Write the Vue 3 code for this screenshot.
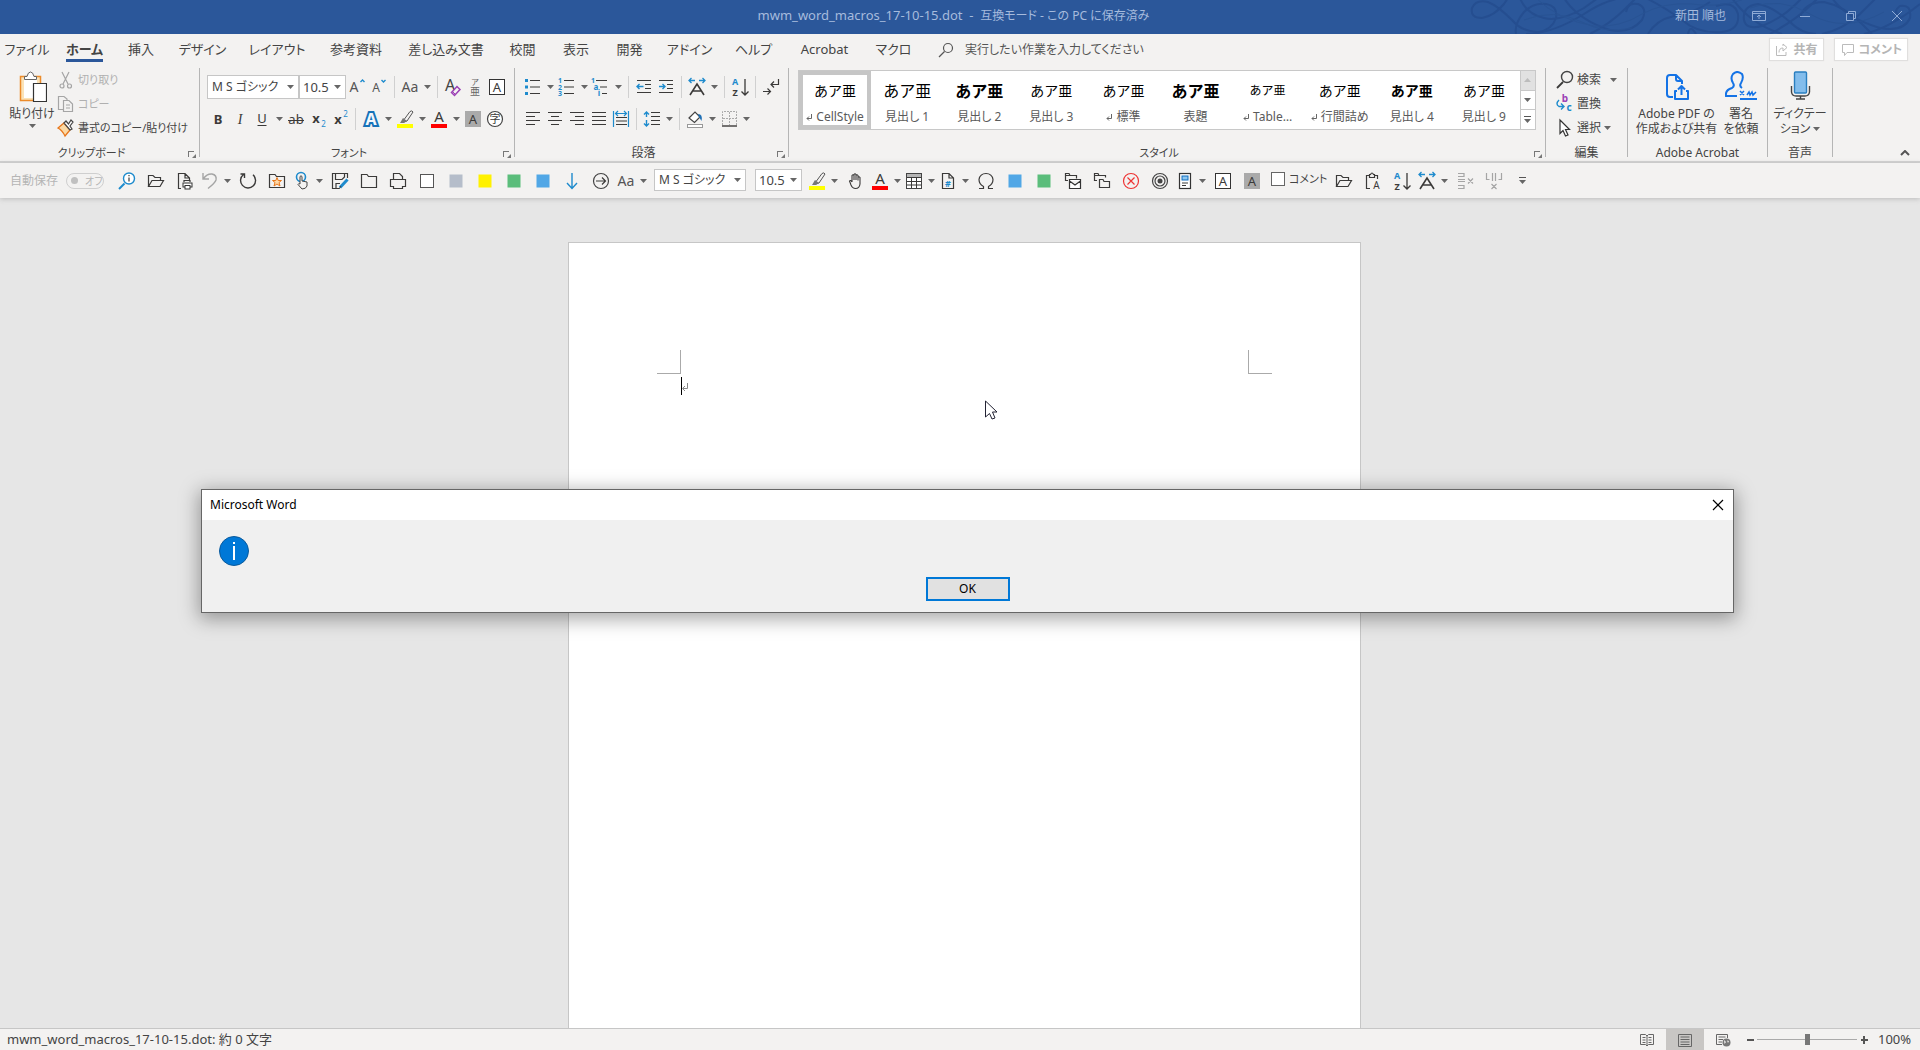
<script setup>
import { h, ref } from 'vue'

const K = '#3b3a39'
const B = '#1e8bcd'
const G = '#a5a5a5'

const line = (d, color = K, width = 1, extra = '') =>
  `<path d="${d}" fill="none" stroke="${color}" stroke-width="${width}" ${extra}/>`
const box = (fill, stroke = 'none') =>
  `<rect x="5.5" y="5.5" width="13" height="13" fill="${fill}" stroke="${stroke}"/>`
const glyph = (t, x, y, size, color = K, extra = '') =>
  `<text x="${x}" y="${y}" font-size="${size}" fill="${color}" text-anchor="middle" ${extra}>${t}</text>`
const sortIcon =
  glyph('A', 7, 10, 9, B, 'font-weight="700"') + glyph('Z', 7, 21, 9, K, 'font-weight="700"') +
  line('M17 4V20M13.5 16.5L17 20L20.500 16.500', K, 1.3)
const scaleIcon =
  line('M5 20L12 9L19 20M8 16H16', K, 1.6) + line('M4 5.500H10M6.500 3L4 5.500L6.500 8M14 5.500H20M17.500 3L20 5.500L17.500 8', B, 1.3)
const highlight =
  '<path d="M10 14L17 4.500Q19 3 20 5L14 14L10 15Z" fill="#f3f2f1" stroke="#555"/><path d="M10 11L7 16H11L14 14Z" fill="#777"/><rect x="4" y="17" width="16" height="4" fill="#ff0"/>'
const fontColor = glyph('A', 12, 15, 15) + '<rect x="4" y="17" width="16" height="4" fill="#f00"/>'
const openFolder = line('M4.500 17.500V6.500H9L11 8.500H16.500V11.500M4.500 17.500L8 11.500H19.500L16 17.500Z', K, 1.2)
const boxedA = '<rect x="4.500" y="4.500" width="15" height="15" fill="#fff" stroke="#333"/>' + glyph('A', 12, 17, 13)
const shadedA = '<rect x="4" y="4" width="16" height="16" fill="#aaa"/>' + glyph('A', 12, 17, 13)

const icons = {
  magnifyInfo: line('M4 20L9.500 14.500', B, 2) + '<circle cx="14" cy="9.500" r="5.500" fill="#fff" stroke="#1e8bcd" stroke-width="1.400"/>' + line('M14 8.500V12.500M14 6V7.200', K, 1.2),
  open: openFolder,
  printDoc: line('M8 19.500H5.500V4.500H12L16.500 9V11M12 4.500V9H16.500M11 13V11.500H17V13', K, 1.2) + '<rect x="10" y="14" width="9" height="4" fill="#fff" stroke="#333"/><rect x="12" y="16.500" width="5" height="3.500" fill="#fff" stroke="#333"/>',
  undo: line('M5 4V10H11M5.500 9.500Q9 4.500 14 5Q19 6 18 11Q17 14 10 19.500', G, 1.4),
  redo: line('M7.500 5.500A7.500 7.500 0 1 0 17 5.800M4.500 5H8.500V9', K, 1.4),
  star: line('M4.500 18.500V5.500H10L11.500 7.500H19.500V18.500Z', K, 1.2) + '<path d="M12 8.500L13.200 11.500H16.500L14 13.500L15 17L12 15L9 17L10 13.500L7.500 11.500H10.800Z" fill="#ffd9a8" stroke="#e8761a"/>',
  touch: '<circle cx="11" cy="8" r="4.500" fill="none" stroke="#1e8bcd" stroke-width="1.600"/><path d="M10 7.500Q11 6 12 7.500V12L17 13V17Q16 20 12 20L8 15.500Q8.500 14 10 15Z" fill="#f3f2f1" stroke="#444"/>',
  saveEdit: line('M11 19.500H4.500V4.500H19.500V9M7.500 4.500V10.500H14L16.500 8V4.500M8 19V14.500H12', K, 1.2) + line('M12 18.500L19.500 10.500', B, 3) + line('M11 20L13 17', K, 1),
  folder: line('M4.500 18.500V5.500H10L11.500 7.500H19.500V18.500Z', K, 1.2),
  printer: line('M7.500 10V4.500H13.500L16.500 7.500V10M4.500 10.500H19.500V17.500H16.500V19.500H7.500V17.500H4.500Z', K, 1.2),
  white: box('#fff', '#555'), gray: box('#b5bdca'), yellow: box('#fff100'), green: box('#5bbd7b'), blue: box('#51a7e6'),
  down: line('M12 4V19M7 14L12 19.500L17 14', B, 1.4),
  circleArrow: '<circle cx="12" cy="12" r="7.500" fill="none" stroke="#444" stroke-width="1.200"/>' + line('M7 12H16.500M13 8.500L16.500 12L13 15.500', K, 1.2),
  caseAa: glyph('Aa', 12, 17, 14, '#555'),
  highlight, fontColor,
  hand: line('M9 13V6.500Q10 5 11 6.500V11M11 11V5.500Q12 4 13 5.500V11M13 11V6.500Q14 5 15 6.500V11.500M15 11.500V8.500Q16 7 17 8.500V15Q16.500 19.500 12.500 19.500Q9.500 19.500 8 16L6.500 12Q7.500 10.500 9 13', K, 1.1),
  table: '<rect x="4.500" y="4.500" width="15" height="15" fill="#fff" stroke="#444"/><rect x="5" y="5" width="14" height="3" fill="#b5b5b5"/>' + line('M5 8.500H19M5 12.500H19M5 16H19M9.500 8V19M14.500 8V19', K, 1),
  docHash: line('M6.500 19.500V4.500H13L17.500 9V19.500ZM13 4.500V9H17.500', K, 1.2) + glyph('#', 12, 18, 9, B, 'font-weight="700"'),
  omega: line('M5 19.500H9.500V17.500Q5 15 5 10.500Q6 4.500 12 4.500Q18 4.500 19 10.500Q19 15 14.500 17.500V19.500H19', K, 1.2),
  foldersMail: line('M7 11.500H4.500V4.500H8L9 6.500H15.500V9.500M4.500 6.500H9', K, 1.2) + '<path d="M8.500 10.500H19.500V19.500H8.500ZM8.500 12L14 16L19.500 12" fill="#fff" stroke="#333" stroke-width="1.200"/>',
  folders: line('M7 11.500H4.500V4.500H8L9 6.500H15.500V8.500M4.500 6.500H9M9.500 18.500V10.500H13L14 12.500H19.500V18.500Z', K, 1.2),
  cancel: '<circle cx="12" cy="12" r="7.500" fill="none" stroke="#e33" stroke-width="1.200"/>' + line('M8.500 8.500L15.500 15.500M15.500 8.500L8.500 15.500', '#e33', 1.2),
  target: '<g fill="none" stroke="#444" stroke-width="1.200"><circle cx="12" cy="12" r="7.500"/><circle cx="12" cy="12" r="5"/></g><circle cx="12" cy="12" r="2.500" fill="#444"/>',
  docBlock: '<rect x="6.500" y="4.500" width="11" height="15" fill="#fff" stroke="#333" stroke-width="1.200"/><rect x="9" y="7" width="6" height="4" fill="#8cc6f0" stroke="#0f6cbd"/>' + line('M9 14H15M9 16.500H13'),
  boxedA, shadedA,
  pasteA: line('M9 19.500H5.500V6.500H8.500M13.500 6.500H16.500V10M8.500 8.500V5.500H9.500Q11 2.500 12.500 5.500H13.500V8.500Z', K, 1.2) + glyph('A', 15.500, 20, 10, K),
  sort: sortIcon, scale: scaleIcon,
  delRow: line('M5 4.500H11V7.500H5M5 19.500H11V16.500H5M5 10.500H12M5 12.500H12M15 9.500L20 14.500M20 9.500L15 14.500', G, 1.2),
  delCol: line('M4.500 4V10.500H7.500M19.500 4V10.500H16.500M10.500 4V12M13.500 4V12M9.500 15L14.500 20M14.500 15L9.500 20', G, 1.2),
  growA: glyph('A', 9, 17, 14, '#555') + line('M15.500 7L17.500 5L19.500 7', B, 1.4),
  shrinkA: glyph('A', 9, 17, 12, '#555') + line('M14.500 5L16.500 7L18.500 5', B, 1.4),
  clearA: glyph('A', 9, 16, 16, '#444') + '<path d="M10.500 17.500L16 11.500L19 14.500L13.500 20.500Z" fill="#f3f2f1" stroke="#9b3fb5" stroke-width="1.500"/>' + line('M11.500 16.500L14.500 19.500', '#9b3fb5'),
  ruby: glyph('ア', 12, 10, 8, '#666') + glyph('亜', 12, 20, 10, '#666'),
  bold: glyph('B', 12, 17, 13, K, 'font-weight="700"'),
  italic: glyph('I', 12, 17, 14, K, 'font-style="italic" font-family="Liberation Serif, serif"'),
  underline: glyph('U', 12, 16, 13) + line('M7.500 18.500H16.500'),
  strike: glyph('ab', 12, 17, 13) + line('M4 13.500H20'),
  sub: glyph('x', 10, 16, 13, K, 'font-weight="700"') + glyph('2', 17.500, 20, 8, B),
  sup: glyph('x', 10, 17, 13, K, 'font-weight="700"') + glyph('2', 17.500, 10, 8, B),
  effectA: glyph('A', 12, 18, 16, '#f3f8fd', 'stroke="#1672b8" stroke-width="4" paint-order="stroke" font-weight="700"'),
  circleJi: '<circle cx="12" cy="12" r="7.500" fill="#fff" stroke="#444" stroke-width="1.200"/>' + glyph('字', 12, 16, 11),
  bullets: '<path d="M4 4h3v3H4zM4 10.500h3v3H4zM4 17h3v3H4z" fill="#1e8bcd"/>' + line('M9 5.500H19M9 12H19M9 18.500H19', K, 1.2),
  numbers: glyph('1', 5, 8, 7, B, 'font-weight="700"') + glyph('2', 5, 15, 7, B, 'font-weight="700"') + glyph('3', 5, 21, 7, B, 'font-weight="700"') + line('M9 5.500H19M9 12H19M9 18.500H19', K, 1.2),
  multi: glyph('1', 4, 8, 7, B, 'font-weight="700"') + glyph('a', 7, 15, 8, B, 'font-weight="700"') + glyph('i', 10, 21, 8, B, 'font-weight="700"') + line('M7 5.500H18M11 12H18M13 18.500H18', K, 1.2),
  outdent: line('M5 5.500H19M13 9.500H19M13 13.500H19M5 17.500H19', K, 1.2) + line('M5 11.500H11.500M7.500 9L5 11.500L7.500 14', B, 1.4),
  indent: line('M5 5.500H19M13 9.500H19M13 13.500H19M5 17.500H19', K, 1.2) + line('M5 11.500H11M8.500 9L11 11.500L8.500 14', B, 1.4),
  marks: line('M19.500 4V9.500H12.500M15 6.500L12 9.500L15 12.500M4 16.500H11.500M8.500 13.500L11.500 16.500L8.500 19.500', K, 1.2),
  left: line('M5 5.500H19M5 9.500H14M5 13.500H19M5 17.500H14', K, 1.2),
  center: line('M5 5.500H19M8 9.500H16M5 13.500H19M8 17.500H16', K, 1.2),
  right: line('M5 5.500H19M10 9.500H19M5 13.500H19M10 17.500H19', K, 1.2),
  justify: line('M5 5.500H19M5 9.500H19M5 13.500H19M5 17.500H19', K, 1.2),
  spread: line('M7 10.500H18M7 14H18M7 17.500H18', K, 1.2) + line('M4.500 4V20M19.500 4V20M7 6.500H17M9 4L6.500 6.500L9 9M15 4L17.500 6.500L15 9', B, 1.2),
  spacing: line('M11 5.500H20M11 9.500H20M11 13.500H20M11 17.500H20', K, 1.2) + line('M6.500 5V10M4 7.500L6.500 5L9 7.500M6.500 13V19M4 16.500L6.500 19L9 16.500', B, 1.4),
  fill: '<path d="M6 11L12 5L17 10L11.500 15.500Z" fill="#fff" stroke="#444" stroke-width="1.200"/><path d="M15 7Q20 7 18.500 14L16 10Z" fill="#1e6fb5"/><rect x="4.500" y="17.500" width="15" height="3" fill="#fff" stroke="#999"/>',
  border: '<path d="M5.500 18V4.500H19.500V18M12.500 5V18M6 11.500H19" fill="none" stroke="#aaa" stroke-dasharray="2 1"/>' + line('M5 19H20', K, 1.4),
  cut: line('M8 4L14 16M15 4L9 16', G, 1.2) + '<g fill="none" stroke="#a5a5a5" stroke-width="1.200"><circle cx="8" cy="18" r="2"/><circle cx="15.500" cy="18" r="2"/></g>',
  copy: line('M9.500 17.500H4.500V4.500H10L13 7V8M9.500 19.500V8.500H15L18.500 12V19.500ZM12 13H16M12 16H16', G, 1.2),
  brush: '<path d="M4 12L10 7L16 14L11 20Q8 14 4 12Z" fill="#fbd9a5" stroke="#e8761a" stroke-width="1.300"/><path d="M10 7L12 5L14.500 8L17 4L19 6L16 10L18 13L16 14Z" fill="#fff" stroke="#444" stroke-width="1.200"/>',
  find: line('M4 20L10 14', K, 1.8) + '<circle cx="14" cy="9" r="5.500" fill="none" stroke="#444" stroke-width="1.400"/>',
  tell: line('M5 19L10.500 13.500', '#555', 1.3) + '<circle cx="14" cy="10" r="4.500" fill="none" stroke="#555" stroke-width="1.200"/>',
  replace: glyph('b', 12, 10, 10, '#9b3fb5', 'font-weight="700"') + glyph('c', 16, 19, 10, B, 'font-weight="700"') + line('M6 8Q2 12 6 14.500H11M8 11.500L11 14.500L8 17.500', B, 1.4),
  pointer: '<path d="M7 4V17.500L10 14.500L12.500 20L15 19L12.500 13.500H16.500Z" fill="#fff" stroke="#333" stroke-width="1.200"/>',
  share: line('M6.500 8V17.500H16V14M9 14.500Q9 10 13 10V13L17 9.500L13 6V8', '#bbb', 1),
  comment: line('M7.500 6.500H18.500V14.500H12L9.500 17.500V14.500H7.500Z', '#bbb', 1),
  ribbonMode: line('M5.500 7.500H18.500V16.500H5.500ZM5.500 9.500H18.500M12 15V11M10 13L12 11L14 13', '#8fabd6', 1),
  minimize: line('M7 12.500H17', '#8fabd6', 1),
  restore: line('M7.500 9.500H14.500V16.500H7.500ZM9.500 9V7.500H16.500V14.500H15', '#8fabd6', 1),
  close: line('M7 7L17 17M17 7L7 17', '#8fabd6', 1),
  closeDark: line('M7 7L17 17M17 7L7 17', '#000', 1.2),
  readMode: line('M5.500 6.500H10.500L12 8L13.500 6.500H18.500V16.500H13.500L12 18L10.500 16.500H5.500ZM12 8V18M7.500 9.500H10.500M7.500 12H10.500M7.500 14.500H10.500M13.500 9.500H16.500M13.500 12H16.500M13.500 14.500H16.500', '#666', 1),
  printMode: line('M5.500 6.500H18.500V18.500H5.500ZM7.500 9H16.500M7.500 11.500H16.500M7.500 14H16.500M7.500 16.500H16.500', '#666', 1),
  webMode: line('M11 16.500H5.500V6.500H16.500V10M7.500 9H14.500M7.500 11.500H12M7.500 14H11', '#666', 1) + '<circle cx="15.500" cy="14.500" r="4" fill="#777"/><path d="M13 12L15 14L13.500 16ZM16 12.500L18 13L17 15Z" fill="#f3f2f1"/>'
}

const Icon = (props) => h('svg', { viewBox: '0 0 24 24', width: 24, height: 24, 'aria-hidden': 'true', class: 'icon', innerHTML: icons[props.name] })
Icon.props = ['name']
const Caret = () => h('svg', { viewBox: '0 0 7 4', width: 7, height: 4, 'aria-hidden': 'true', class: 'caret', innerHTML: '<path d="M0 0H7L3.500 4Z" fill="#666"/>' })

const tabs = [
  ['ファイル', 54], ['ホーム', 61], ['挿入', 52], ['デザイン', 71], ['レイアウト', 78], ['参考資料', 80], ['差し込み文書', 100],
  ['校閲', 53], ['表示', 54], ['開発', 53], ['アドイン', 67], ['ヘルプ', 61], ['Acrobat', 81], ['マクロ', 57]
]
// A trailing "+" marks a button that opens a drop-down.
const fontTop = ['growA', 'shrinkA', '|', 'caseAa+', '|', 'clearA', 'ruby', 'boxedA']
const fontBottom = ['bold', 'italic', 'underline+', 'strike', 'sub', 'sup', '|', 'effectA+', 'highlight+', 'fontColor+', 'shadedA', 'circleJi']
const paraTop = ['bullets+', 'numbers+', 'multi+', '|', 'outdent', 'indent', '|', 'scale+', '|', 'sort', '|', 'marks']
const paraBottom = ['left', 'center', 'right', 'justify', 'spread', '|', 'spacing+', '|', 'fill+', 'border+']
const quickA = ['magnifyInfo', 'open', 'printDoc', 'undo+', 'redo', 'star', 'touch+', 'saveEdit', 'folder', 'printer', 'white', 'gray', 'yellow', 'green', 'blue', 'down', 'circleArrow', 'caseAa+']
const quickB = ['highlight+', 'hand', 'fontColor+', 'table+', 'docHash+', 'omega', 'blue', 'green', 'foldersMail', 'folders', 'cancel', 'target', 'docBlock+', 'boxedA', 'shadedA']
const quickC = ['open', 'pasteA', 'sort', 'scale+', 'delRow', 'delCol']

const styles = [
  { name: 'CellStyle', mark: true, kind: 'm' }, { name: '見出し 1', kind: 'l' }, { name: '見出し 2', kind: 'l b' }, { name: '見出し 3', kind: 'm' },
  { name: '標準', mark: true, kind: 'm' }, { name: '表題', kind: 'l b' }, { name: 'Table…', mark: true, kind: 's' },
  { name: '行間詰め', mark: true, kind: 'm' }, { name: '見出し 4', kind: 'm b' }, { name: '見出し 9', kind: 'm' }
]
const zoom = ref(50)
</script>

<template>
  <div class="app">
    <header class="title-bar">
      <svg class="swirls" viewBox="0 0 460 34" width="460" height="34" aria-hidden="true">
        <g fill="none" stroke="#254e90" stroke-width="2">
          <path d="M22 18Q10 18 12 8Q16 -1 28 2Q38 6 52 20Q62 32 78 32Q92 30 96 18Q98 6 86 4Q74 2 64 12Q54 24 56 34" />
          <path d="M22 18Q34 16 44 4L48 -2M60 -2Q66 14 84 18Q100 22 124 8L138 -2M104 -2Q118 20 150 30Q170 34 182 20Q188 8 178 4Q168 2 166 12" />
          <path d="M66 34Q92 34 124 14Q142 2 160 -2M130 34Q150 24 166 8L176 -2M186 -2Q206 8 222 20Q238 34 262 32Q280 30 278 14Q274 0 256 6" />
          <path d="M188 34Q196 20 214 16Q236 12 250 2M228 34Q230 24 236 34M272 -2Q290 24 322 34M284 20Q282 6 298 4Q312 6 330 22Q342 34 356 34" />
          <path d="M284 20Q286 30 302 26Q322 18 336 4L342 -2M310 34Q336 20 352 4L358 -2M340 18Q344 2 364 2Q384 6 402 24L412 34" />
          <path d="M362 34Q382 30 400 14L416 -2M372 -2Q386 18 420 28Q444 32 450 18Q452 4 440 6Q432 12 440 16M404 34Q430 28 460 4" />
        </g>
        <g fill="none" stroke="#285394" stroke-width="1">
          <path d="M76 -2Q98 20 134 26Q160 28 182 14Q204 2 232 4Q256 8 282 0M64 20Q94 8 122 22Q144 34 172 28M290 8Q320 -4 350 14Q384 34 424 12" />
        </g>
      </svg>
      <h1>mwm_word_macros_17-10-15.dot&nbsp; -&nbsp; <small>互換モード - この PC に保存済み</small></h1>
      <div class="window-tools">
        <span class="user">新田 順也</span>
        <button v-for="n in ['ribbonMode', 'minimize', 'restore', 'close']" :key="n" :aria-label="n"><Icon :name="n" /></button>
      </div>
    </header>

    <nav class="tabs">
      <button v-for="([label, w], i) in tabs" :key="label" class="tab" :class="{ active: i === 1 }" :style="{ width: w + 'px' }"><span>{{ label }}</span></button>
      <label class="tell-me"><Icon name="tell" /><input type="text" aria-label="検索" placeholder="実行したい作業を入力してください" /></label>
      <div class="pills">
        <button class="pill"><Icon name="share" />共有</button>
        <button class="pill"><Icon name="comment" />コメント</button>
      </div>
    </nav>

    <section class="ribbon">
      <div class="group clipboard">
        <div class="body">
          <button class="big paste">
            <svg viewBox="0 0 30 32" width="30" height="32" aria-hidden="true">
              <path d="M3.500 5.500H23.500V29.500H3.500Z" fill="#fbe3b8" stroke="#ec8b2a" stroke-width="1.500" />
              <path d="M7 8H20V27H7Z" fill="#fff" />
              <path d="M7.500 8.500V5.500H10Q11 1 13.500 1Q16 1 17 5.500H19.500V8.500Z" fill="#fff" stroke="#666" />
              <path d="M16.500 12.500H29.500V30.500H16.500Z" fill="#fff" stroke="#333" stroke-width="1.200" />
            </svg>
            <span>貼り付け</span><Caret />
          </button>
          <div class="commands">
            <button class="off"><Icon name="cut" />切り取り</button>
            <button class="off"><Icon name="copy" />コピー</button>
            <button><Icon name="brush" />書式のコピー/貼り付け</button>
          </div>
        </div>
        <footer class="kana wing">クリップボード<i class="launcher"></i></footer>
      </div>

      <div class="group font">
        <div class="rows">
          <div class="row">
            <label class="combo wide"><select aria-label="フォント"><option>M S ゴシック</option></select><Caret /></label>
            <label class="combo narrow"><select aria-label="フォント サイズ"><option>10.5</option></select><Caret /></label>
            <template v-for="(n, i) in fontTop" :key="i"><i v-if="n === '|'" class="sep"></i>
              <button v-else class="tool" :aria-label="n"><Icon :name="n.replace('+', '')" /><Caret v-if="n.endsWith('+')" /></button></template>
          </div>
          <div class="row">
            <template v-for="(n, i) in fontBottom" :key="i"><i v-if="n === '|'" class="sep"></i>
              <button v-else class="tool" :aria-label="n"><Icon :name="n.replace('+', '')" /><Caret v-if="n.endsWith('+')" /></button></template>
          </div>
        </div>
        <footer class="kana wing">フォント<i class="launcher"></i></footer>
      </div>

      <div class="group paragraph">
        <div class="rows">
          <div v-for="(r, j) in [paraTop, paraBottom]" :key="j" class="row">
            <template v-for="(n, i) in r" :key="i"><i v-if="n === '|'" class="sep"></i>
              <button v-else class="tool" :aria-label="n"><Icon :name="n.replace('+', '')" /><Caret v-if="n.endsWith('+')" /></button></template>
          </div>
        </div>
        <footer class="wing">段落<i class="launcher"></i></footer>
      </div>

      <div class="group style-group">
        <div class="gallery">
          <button v-for="(s, i) in styles" :key="s.name" class="style" :class="{ selected: i === 0 }">
            <span class="sample" :class="s.kind">あア亜</span>
            <span class="style-name"><svg v-if="s.mark" viewBox="0 0 6 7" width="6" height="7" aria-hidden="true"><path d="M5.500 0V4.500H1M3 2.500L1 4.500L3 6.500" fill="none" stroke="#666" /></svg>{{ s.name }}</span>
          </button>
          <div class="scroller">
            <button class="up" aria-label="上"><Caret /></button>
            <button aria-label="下"><Caret /></button>
            <button class="more" aria-label="その他"><Caret /></button>
          </div>
        </div>
        <footer class="kana wing">スタイル<i class="launcher"></i></footer>
      </div>

      <div class="group editing">
        <div class="commands">
          <button><Icon name="find" />検索<Caret class="far" /></button>
          <button><Icon name="replace" />置換</button>
          <button><Icon name="pointer" />選択<Caret /></button>
        </div>
        <footer>編集</footer>
      </div>

      <div class="group acrobat">
        <div class="body">
          <button class="big pdf">
            <svg viewBox="0 0 30 32" width="30" height="32" aria-hidden="true">
              <path d="M11 26H8Q5 26 5 23V7Q5 4 8 4H14L20 10V13M14 4V8Q14 10 16 10H20M15 20H13V28H26V20H24M19.500 24V15M16 18.500L19.500 15L23 18.500" fill="none" stroke="#1473e6" stroke-width="2" stroke-linejoin="round" />
            </svg>
            <span>Adobe PDF の<br />作成および共有</span>
          </button>
          <button class="big sign">
            <svg viewBox="0 0 32 32" width="32" height="32" aria-hidden="true">
              <path d="M12 25H1Q0 19 7 17Q10 15 8 12Q5 7 8 3Q12 -1 17 3Q19 7 16 12Q14 15 17 17M15 28H32" fill="none" stroke="#1473e6" stroke-width="2" />
              <path d="M15 20L19 24M19 20L15 24M22 24L24 21L25 24L27 21L28 24L31 21" fill="none" stroke="#1473e6" stroke-width="1.500" />
            </svg>
            <span>署名<br />を依頼</span>
          </button>
        </div>
        <footer>Adobe Acrobat</footer>
      </div>

      <div class="group voice">
        <button class="big">
          <svg viewBox="0 0 24 32" width="24" height="32" aria-hidden="true">
            <rect x="6.500" y="1" width="12" height="21" rx="1" fill="#83bdec" stroke="#2a7fc0" stroke-width="1.400" />
            <path d="M3.500 15V21Q4 25 8 25H17Q21 25 21.500 21V15M12.500 25V28M8 28H17" fill="none" stroke="#444" stroke-width="1.400" />
          </svg>
          <span>ディクテー<br />ション <Caret /></span>
        </button>
        <footer>音声</footer>
      </div>
      <button class="collapse" aria-label="リボンを折りたたむ"><svg viewBox="0 0 10 6" width="10" height="6" aria-hidden="true"><path d="M1 5L5 1L9 5" fill="none" stroke="#555" stroke-width="2" /></svg></button>
    </section>

    <section class="quick">
      <label class="autosave"><span>自動保存</span><input type="checkbox" disabled /><span class="switch"><i></i>オフ</span></label>
      <button v-for="(n, i) in quickA" :key="'a' + i" class="tool" :aria-label="n"><Icon :name="n.replace('+', '')" /><Caret v-if="n.endsWith('+')" /></button>
      <label class="combo wide"><select aria-label="フォント"><option>M S ゴシック</option></select><Caret /></label>
      <label class="combo narrow"><select aria-label="フォント サイズ"><option>10.5</option></select><Caret /></label>
      <button v-for="(n, i) in quickB" :key="'b' + i" class="tool" :aria-label="n"><Icon :name="n.replace('+', '')" /><Caret v-if="n.endsWith('+')" /></button>
      <label class="check"><input type="checkbox" />コメント</label>
      <button v-for="(n, i) in quickC" :key="'c' + i" class="tool" :aria-label="n"><Icon :name="n.replace('+', '')" /><Caret v-if="n.endsWith('+')" /></button>
      <button class="tool more" aria-label="カスタマイズ"><Caret /></button>
    </section>

    <main class="canvas">
      <article class="sheet">
        <div class="margins"><i class="corner start"></i><i class="corner end"></i></div>
        <p class="text-line"><svg viewBox="0 0 8 18" width="8" height="18" aria-hidden="true"><path d="M0.500 0V18" stroke="#000" /><path d="M6.500 6V11.500H2M4 9L1.500 11.500L4 14" fill="none" stroke="#888" /></svg></p>
      </article>
      <svg class="mouse" viewBox="0 0 13 20" width="13" height="20" aria-hidden="true"><path d="M0.500 1V17L4.500 13.500L7 19L10 18L7.500 12H12Z" fill="#fff" stroke="#223" /></svg>
    </main>

    <div class="dialog" role="dialog" aria-label="Microsoft Word">
      <header><span>Microsoft Word</span><button aria-label="閉じる"><Icon name="closeDark" /></button></header>
      <div class="dialog-body">
        <svg viewBox="0 0 30 30" width="30" height="30" aria-hidden="true"><circle cx="15" cy="15" r="14.500" fill="#0078d7" stroke="#0a5a9c" /><path d="M15 6V8M15 10V24" stroke="#fff" stroke-width="2" /></svg>
        <button class="ok">OK</button>
      </div>
    </div>

    <footer class="status">
      <span class="count">mwm_word_macros_17-10-15.dot: 約 0 文字</span>
      <div class="views">
        <button aria-label="閲覧モード"><Icon name="readMode" /></button>
        <button class="on" aria-label="印刷レイアウト"><Icon name="printMode" /></button>
        <button aria-label="Web レイアウト"><Icon name="webMode" /></button>
      </div>
      <button class="step minus" aria-label="縮小"></button>
      <input v-model="zoom" type="range" min="0" max="100" aria-label="ズーム" />
      <button class="step plus" aria-label="拡大"></button>
      <output class="count">100%</output>
    </footer>
  </div>
</template>

<style>
body { margin: 0; overflow: hidden; }
</style>

<style scoped>
.app { position: relative; display: flex; flex-direction: column; height: 100vh; overflow: hidden; background: #e6e6e6; color: #444; font: 12px/16px "Noto Sans", "Noto Sans CJK JP", sans-serif; font-feature-settings: "palt"; white-space: nowrap; }
button { display: flex; align-items: center; padding: 0; border: 0; background: none; color: inherit; font: inherit; font-feature-settings: inherit; white-space: nowrap; }
input, select { margin: 0; border: 0; border-radius: 0; background: none; color: inherit; font: inherit; font-feature-settings: inherit; }
.icon, .caret { flex: none; overflow: visible; }

.title-bar { position: relative; display: flex; align-items: center; justify-content: center; height: 34px; flex: none; background: #2b579a; color: #a6bbdd; }
.title-bar h1 { position: relative; margin: 0 13px 3px 0; font-size: 13px; font-weight: 400; }
.title-bar small { font-size: 12px; }
.swirls { position: absolute; right: 0; top: 0; }
.window-tools { position: absolute; right: 0; top: 0; display: flex; align-items: center; height: 32px; }
.user { margin-right: 10px; }
.window-tools button { justify-content: center; width: 46px; height: 32px; }

.tabs { display: flex; align-items: center; height: 34px; flex: none; background: #f3f2f1; font-size: 13px; }
.tab { align-items: flex-start; justify-content: center; height: 34px; flex: none; }
.tab span { margin-top: 6px; padding-bottom: 1px; border-bottom: 3px solid transparent; line-height: 18px; }
.tab.active { font-weight: 700; }
.tab.active span { border-color: #2b579a; }
.tell-me { display: flex; align-items: center; flex: 1; padding: 0 0 3px 12px; gap: 7px; font-size: 12px; }
.tell-me input { width: 240px; padding: 0; outline: 0; }
.tell-me input::placeholder { color: #555; opacity: 1; }
.pills { display: flex; gap: 12px; padding: 0 13px 3px 0; }
.pill { height: 21px; padding-right: 5px; background: #fff; box-shadow: 0 0 1px 1px #e0dfde; color: #b5b5b5; font-size: 12px; font-weight: 700; }

.ribbon { position: relative; display: flex; height: 93px; flex: none; background: #f3f2f1; border-bottom: 2px solid #d0d0d0; }
.group { position: relative; display: flex; flex-direction: column; height: 89px; box-sizing: border-box; flex: none; border-right: 1px solid #b5b5b5; }
.group footer { margin-top: auto; line-height: 8px; text-align: center; }
.group footer.kana { font-size: 11px; }
.group footer.wing { padding-right: 16px; }
.launcher { position: absolute; right: 5px; bottom: 0; width: 5px; height: 5px; border: solid #777; border-width: 1px 0 0 1px; }
.launcher::after { content: ""; position: absolute; right: -2px; bottom: -1px; border: 2px solid; border-color: transparent #777 #777 transparent; }
.clipboard { width: 200px; }
.font { width: 315px; }
.paragraph { width: 274px; }
.style-group { flex: 0 1 757px; }
.editing { width: 82px; }
.acrobat { width: 140px; }
.voice { width: 65px; }
.body { display: flex; }
.big { flex-direction: column; padding-top: 3px; line-height: 15px; text-align: center; }
.big span { margin-top: 3px; }
.paste { width: 64px; }
.paste .caret { margin-top: 3px; }
.pdf { width: 95px; padding-left: 2px; }
.sign { width: 36px; }
.voice .big { width: 64px; }
.voice .big .caret { vertical-align: 2px; }
.commands button { height: 24px; }
.clipboard .commands { margin-left: -10px; font-size: 11px; }
.commands .off { color: #b0b0b0; }
.editing .commands { padding-left: 7px; }
.editing .commands .caret { margin-left: 3px; }
.editing .commands .far { margin-left: 9px; }
.rows { padding: 3px 0 0 7px; }
.row { display: flex; align-items: center; height: 32px; }
.tool { flex: none; width: 22px; height: 24px; justify-content: center; }
.tool:has(.caret) { width: 34px; justify-content: flex-start; gap: 2px; }
.tool:has(.caret) .icon { margin-left: -1px; }
.sep { width: 1px; height: 22px; margin: 0 4px; background: #d0d0d0; }
.combo { display: grid; align-items: center; box-sizing: border-box; height: 24px; flex: none; border: 1px solid #c6c6c6; background: #fff; }
.combo select { grid-area: 1 / 1; appearance: none; width: 100%; height: 20px; padding: 0 0 0 4px; outline: 0; font-size: 12px; }
.combo.narrow select { padding-left: 3px; font-size: 13px; }
.combo .caret { grid-area: 1 / 1; justify-self: end; margin-right: 4px; pointer-events: none; }
.wide { width: 92px; }
.narrow { width: 47px; }

.gallery { display: flex; height: 60px; box-sizing: border-box; margin: 2px 9px 0; border: 1px solid #c8c8c8; background: #fff; }
.style { flex: 1 1 0; min-width: 0; flex-direction: column; justify-content: flex-end; gap: 12px; padding-bottom: 1px; border: 4px solid transparent; }
.style.selected { border-color: #c6c6c6; }
.sample { color: #000; font: 14px/16px "Noto Sans CJK JP", sans-serif; font-feature-settings: normal; }
.sample.l { font-size: 16px; }
.sample.s { font-size: 12px; }
.sample.b { font-weight: 700; }
.style-name { color: #5a5a5a; line-height: 14px; }
.style-name svg { margin-right: 4px; }
.scroller { display: flex; flex-direction: column; width: 14px; border-left: 1px solid #c8c8c8; }
.scroller button { flex: 1; flex-direction: column; justify-content: center; gap: 2px; }
.scroller button + button { border-top: 1px solid #c8c8c8; }
.scroller .up { background: #e1e1e1; }
.scroller .up .caret { transform: rotate(180deg); opacity: .3; }
.more::before { content: ""; width: 7px; height: 1px; background: #555; }
.collapse { margin: 80px 10px 0 auto; height: 10px; }

.quick { position: relative; display: flex; align-items: center; height: 35px; flex: none; background: #f3f2f1; box-shadow: 0 1px 5px #bbb; }
.autosave { display: flex; align-items: center; box-sizing: border-box; width: 112px; padding-left: 10px; gap: 8px; flex: none; color: #b5b5b5; }
.autosave input { position: absolute; opacity: 0; }
.switch { display: flex; align-items: center; gap: 7px; box-sizing: border-box; width: 38px; height: 16px; padding-left: 4px; border: 1px solid #cfcfcf; border-radius: 8px; font-size: 10px; }
.switch i { width: 7px; height: 7px; border-radius: 50%; background: #c0c0c0; }
.quick .tool { width: 29px; }
.quick .tool:has(.caret) { width: 34px; }
.quick .combo { height: 22px; margin: 0 4px 2px 5px; }
.quick .tool.more { flex-direction: column; justify-content: center; width: 29px; }
.check { display: flex; align-items: center; gap: 4px; width: 58px; padding: 0 0 3px 5px; flex: none; font-size: 11px; }
.check input { appearance: none; width: 14px; height: 14px; flex: none; border: 1px solid #666; background: #fff; }

.canvas { position: relative; display: flex; justify-content: center; flex: 1; min-height: 0; padding: 44px 0 0 9px; }
.sheet { width: 793px; box-sizing: border-box; border: 1px solid #c6c6c6; border-bottom: 0; background: #fff; }
.margins { display: flex; justify-content: space-between; padding: 107px 88px 0; }
.corner { width: 23px; height: 23px; border: solid #aaa; border-width: 0 0 1px; }
.corner.start { border-right-width: 1px; }
.corner.end { border-left-width: 1px; }
.text-line { margin: 3px 0 0 112px; }
.mouse { position: absolute; left: 985px; top: 202px; }

.dialog { position: absolute; top: 489px; left: 201px; right: 186px; border: 1px solid #666; background: #f0f0f0; box-shadow: 0 4px 18px 2px rgba(0, 0, 0, .35); color: #000; }
.dialog header { display: flex; align-items: center; justify-content: space-between; height: 30px; padding: 0 3px 0 8px; background: #fff; }
.dialog-body { display: flex; flex-direction: column; padding: 16px 17px 11px; }
.ok { align-self: center; justify-content: center; box-sizing: border-box; width: 84px; height: 24px; margin-top: 11px; border: 2px solid #0078d7; background: #e1e1e1; }

.status { position: relative; display: flex; align-items: center; height: 22px; box-sizing: border-box; flex: none; padding: 0 8px 0 7px; border-top: 1px solid #c6c6c6; background: #f3f2f1; font-size: 13px; }
.count { padding-bottom: 2px; }
.views { display: flex; margin-left: auto; }
.views button { justify-content: center; width: 38px; height: 21px; }
.views .on { background: #c8c6c4; }
.step { position: relative; justify-content: center; width: 14px; height: 14px; }
.minus { margin-left: 1px; }
.step::before { content: ""; width: 7px; height: 2px; background: #555; }
.plus::after { content: ""; position: absolute; width: 2px; height: 8px; background: #555; }
input[type="range"] { appearance: none; width: 100px; height: 12px; background: linear-gradient(#aaa, #aaa) center / 100% 1px no-repeat; }
input[type="range"]::-webkit-slider-thumb { appearance: none; width: 5px; height: 11px; background: #777; }
.status output { width: 34px; margin-left: 7px; }
</style>
